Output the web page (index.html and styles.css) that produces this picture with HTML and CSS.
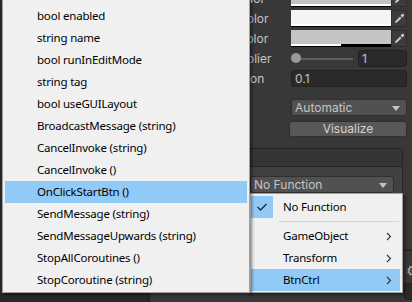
FILE: index.html
```html
<!DOCTYPE html>
<html lang="en">
<head>
    <meta charset="UTF-8">
    <title>On Click</title>
    <link rel="stylesheet" href="styles.css">
</head>
<body>
    <div class="layout">
        <div class="side-pane"></div>

        <div class="inspector">
            <!-- Farbfelder -->
            <div class="row row-first">
                <span class="label">Pressed Color</span>
                <div class="color-field">
                    <div class="swatch swatch-gray"><span class="alpha" style="width: 100%"></span></div>
                    <span class="picker"><svg width="11" height="11" viewBox="0 0 11 11"><path d="M1 10 L1.5 8 L6 3.5 L7.5 5 L3 9.5 Z M6.5 2.5 L8 1 Q9 0.5 10 1.5 Q10.5 2.5 9.5 3.5 L8.5 4.5 Z" fill="#c8c8c8"/></svg></span>
                </div>
            </div>
            <div class="row">
                <span class="label">Selected Color</span>
                <div class="color-field">
                    <div class="swatch swatch-white"><span class="alpha" style="width: 100%"></span></div>
                    <span class="picker"><svg width="11" height="11" viewBox="0 0 11 11"><path d="M1 10 L1.5 8 L6 3.5 L7.5 5 L3 9.5 Z M6.5 2.5 L8 1 Q9 0.5 10 1.5 Q10.5 2.5 9.5 3.5 L8.5 4.5 Z" fill="#c8c8c8"/></svg></span>
                </div>
            </div>
            <div class="row">
                <span class="label">Disabled Color</span>
                <div class="color-field">
                    <div class="swatch swatch-gray"><span class="alpha" style="width: 50%"></span></div>
                    <span class="picker"><svg width="11" height="11" viewBox="0 0 11 11"><path d="M1 10 L1.5 8 L6 3.5 L7.5 5 L3 9.5 Z M6.5 2.5 L8 1 Q9 0.5 10 1.5 Q10.5 2.5 9.5 3.5 L8.5 4.5 Z" fill="#c8c8c8"/></svg></span>
                </div>
            </div>
            <div class="row">
                <span class="label">Color Multiplier</span>
                <div class="slider-field">
                    <div class="slider"><span class="knob"></span></div>
                    <div class="input input-small">1</div>
                </div>
            </div>
            <div class="row">
                <span class="label">Fade Duration</span>
                <div class="input">0.1</div>
            </div>

            <div class="row row-gap">
                <span class="label">Navigation</span>
                <div class="dropdown">Automatic <span class="arrow"></span></div>
            </div>
            <div class="row">
                <span class="label"></span>
                <div class="button">Visualize</div>
            </div>

            <!-- Event-Liste -->
            <div class="events">
                <div class="events-header">On Click ()</div>
                <div class="events-body">
                    <div class="dropdown">Runtime Only</div>
                    <div class="dropdown">No Function <span class="arrow"></span></div>
                    <div class="object-field">None (Object)</div>
                </div>
            </div>

            <div class="component-header">
                <span class="gear">&#9881;</span>
            </div>
            <div class="component-row">
                <span class="label"></span>
                <div class="input"></div>
            </div>
        </div>
    </div>

    <!-- Methoden-Menü -->
    <ul class="menu">
        <li>bool enabled</li>
        <li>string name</li>
        <li>bool runInEditMode</li>
        <li>string tag</li>
        <li>bool useGUILayout</li>
        <li>BroadcastMessage (string)</li>
        <li>CancelInvoke (string)</li>
        <li>CancelInvoke ()</li>
        <li class="active">OnClickStartBtn ()</li>
        <li>SendMessage (string)</li>
        <li>SendMessageUpwards (string)</li>
        <li>StopAllCoroutines ()</li>
        <li>StopCoroutine (string)</li>
    </ul>

    <!-- Komponenten-Menü -->
    <ul class="popup">
        <li class="checked">
            <span class="check"><svg width="12" height="10" viewBox="0 0 12 10"><path d="M1.5 5 L4.5 8 L10.5 2" stroke="#1c2a3a" stroke-width="1.3" fill="none"/></svg></span>
            No Function
        </li>
        <li class="separator"></li>
        <li>GameObject <span class="chevron"><svg width="6" height="9" viewBox="0 0 6 9"><path d="M1 1 L4.5 4.5 L1 8" stroke="#333" stroke-width="1.1" fill="none"/></svg></span></li>
        <li>Transform <span class="chevron"><svg width="6" height="9" viewBox="0 0 6 9"><path d="M1 1 L4.5 4.5 L1 8" stroke="#333" stroke-width="1.1" fill="none"/></svg></span></li>
        <li class="active">BtnCtrl <span class="chevron"><svg width="6" height="9" viewBox="0 0 6 9"><path d="M1 1 L4.5 4.5 L1 8" stroke="#333" stroke-width="1.1" fill="none"/></svg></span></li>
    </ul>
</body>
</html>
```

FILE: styles.css
```css
/* Grund-Layout */
* {
    box-sizing: border-box;
}

html, body {
    margin: 0;
    height: 100%;
    overflow: hidden;
}

body {
    background: #383838;
    font-family: Inter, Roboto, sans-serif;
    font-size: 12px;
    color: #c4c4c4;
}

.layout {
    display: flex;
    height: 100%;
}

.side-pane {
    width: 150px;
    flex: none;
    background: #282828;
    border-right: 1px solid #1f1f1f;
}

.inspector {
    flex: 1;
    padding-right: 5px;
}

/* Zeilen mit Label + Feld */
.row {
    display: grid;
    grid-template-columns: 141px 1fr;
    align-items: center;
    height: 17px;
    margin-bottom: 3px;
}

.row-first {
    margin-top: -10px;
}

.row-gap {
    margin-top: 12px;
    margin-bottom: 4px;
}

.label {
    padding-left: 35px;
    white-space: nowrap;
    overflow: hidden;
}

.color-field {
    display: flex;
    height: 17px;
}

.swatch {
    flex: 1;
    display: flex;
    align-items: flex-end;
}

.swatch-gray {
    background: linear-gradient(#c4c4c4, #c4c4c4) top / 100% 14px no-repeat, #000;
}

.swatch-white {
    background: linear-gradient(#f4f4f4, #f4f4f4) top / 100% 14px no-repeat, #000;
}

.alpha {
    display: block;
    height: 2px;
    margin-bottom: 1px;
    background: #fff;
}

.picker {
    width: 16px;
    display: flex;
    align-items: center;
    justify-content: center;
    background: #3c3c3c;
    border: 1px solid #2c2c2c;
}

.slider-field {
    display: grid;
    grid-template-columns: 1fr 49px;
    gap: 5px;
    height: 17px;
}

.slider {
    position: relative;
    display: flex;
    align-items: center;
}

.slider::before {
    content: "";
    display: block;
    height: 2px;
    width: 62px;
    background: #5e5e5e;
}

.knob {
    position: absolute;
    left: 0;
    top: 3px;
    width: 10px;
    height: 10px;
    border-radius: 50%;
    background: #999;
}

.input {
    height: 17px;
    line-height: 15px;
    padding-left: 3px;
    background: #2a2a2a;
    border: 1px solid #212121;
    border-radius: 3px;
}

.dropdown {
    position: relative;
    height: 17px;
    line-height: 15px;
    padding-left: 3px;
    background: #515151;
    border: 1px solid #303030;
    border-radius: 3px;
    white-space: nowrap;
    overflow: hidden;
}

.arrow {
    position: absolute;
    right: 6px;
    top: 6px;
    border-left: 4px solid transparent;
    border-right: 4px solid transparent;
    border-top: 5px solid #c4c4c4;
}

.button {
    margin-left: -2px;
    height: 16px;
    line-height: 14px;
    text-align: center;
    background: #585858;
    border: 1px solid #303030;
    border-radius: 3px;
    color: #d2d2d2;
}

/* Event-Liste */
.events {
    margin: 11px 4px 0 20px;
}

.events-header {
    height: 19px;
    line-height: 17px;
    padding-left: 6px;
    background: #353535;
    border: 1px solid #242424;
    border-radius: 3px 3px 0 0;
}

.events-body {
    display: grid;
    grid-template-columns: 65px 1fr;
    gap: 4px;
    padding: 9px 8px 8px 10px;
    background: #414141;
    border: 1px solid #242424;
    border-top: none;
    height: 83px;
}

.object-field {
    grid-column: 1;
    height: 17px;
    line-height: 15px;
    padding-left: 3px;
    background: #2a2a2a;
    border: 1px solid #212121;
    border-radius: 3px;
    white-space: nowrap;
    overflow: hidden;
}

.component-header {
    display: flex;
    justify-content: flex-end;
    align-items: center;
    height: 30px;
    padding-top: 10px;
    margin-right: -12px;
    border-top: 1px solid #1f1f1f;
    font-size: 15px;
    color: #b0b0b0;
}

.component-row {
    display: grid;
    grid-template-columns: 254px 1fr;
    margin-top: 3px;
    margin-right: -10px;
}

/* Windows-Menüs */
.menu, .popup {
    position: absolute;
    margin: 0;
    list-style: none;
    background: #f0f0f0;
    font-family: "Noto Sans", sans-serif;
    font-size: 11.5px;
    letter-spacing: -0.2px;
    color: #000;
    box-shadow: 2px 2px 3px rgba(0, 0, 0, 0.45);
}

.menu {
    left: 2px;
    top: 0;
    width: 248px;
    height: 293px;
    padding: 5px 2px 1px 2px;
    border: 1px solid #a0a0a0;
    border-top: none;
    z-index: 2;
}

.menu li, .popup li {
    height: 22px;
    line-height: 22px;
    white-space: nowrap;
}

.menu li {
    padding-left: 32px;
}

.menu li.active, .popup li.active {
    background: #91c9f7;
}

.popup {
    left: 248px;
    top: 193px;
    width: 155px;
    height: 100px;
    padding: 2px;
    border: 1px solid #a0a0a0;
    z-index: 1;
}

.popup li {
    display: flex;
    align-items: center;
    padding-left: 32px;
}

.popup li.checked {
    padding-left: 0;
}

.check {
    width: 22px;
    height: 22px;
    margin-right: 10px;
    display: flex;
    align-items: center;
    justify-content: center;
    background: #91c9f7;
}

.popup li.separator {
    height: 1px;
    margin: 3px 1px 3px 28px;
    background: #d5d5d5;
}

.chevron {
    margin-left: auto;
    margin-right: 8px;
    display: flex;
}
```
